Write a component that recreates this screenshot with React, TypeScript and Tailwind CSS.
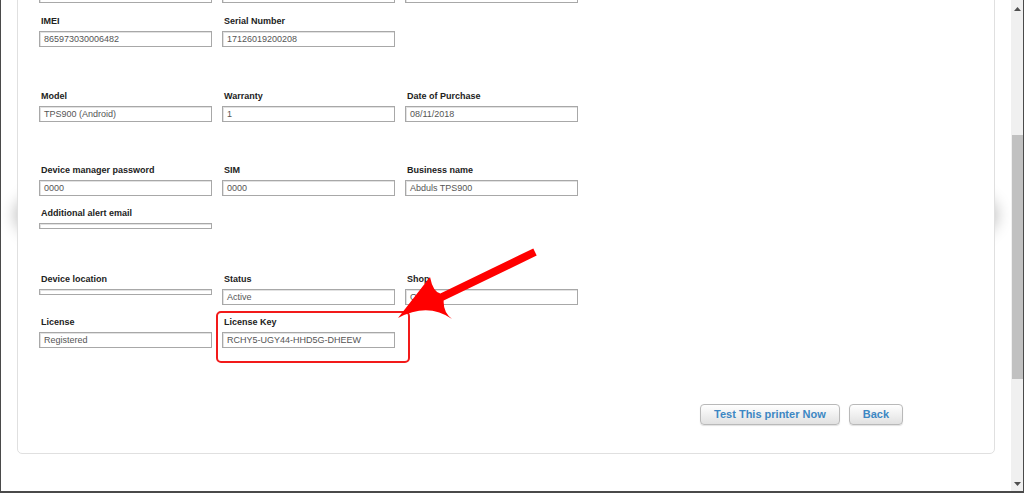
import React from 'react'

type Field = {
  label: string
  value?: string
  collapsed?: boolean
}

type Row = {
  fields: (Field | null)[]
  gap: string
}

const rows: Row[] = [
  { gap: 'mt-0', fields: [{ label: '', value: '' }, { label: '', value: '' }, { label: '', value: '' }] },
  { gap: 'mt-[12px]', fields: [{ label: 'IMEI', value: '865973030006482' }, { label: 'Serial Number', value: '17126019200208' }, null] },
  { gap: 'mt-[43px]', fields: [{ label: 'Model', value: 'TPS900 (Android)' }, { label: 'Warranty', value: '1' }, { label: 'Date of Purchase', value: '08/11/2018' }] },
  { gap: 'mt-[42px]', fields: [{ label: 'Device manager password', value: '0000' }, { label: 'SIM', value: '0000' }, { label: 'Business name', value: 'Abduls TPS900' }] },
  { gap: 'mt-[11px]', fields: [{ label: 'Additional alert email', collapsed: true }, null, null] },
  { gap: 'mt-[44px]', fields: [{ label: 'Device location', collapsed: true }, { label: 'Status', value: 'Active' }, { label: 'Shop', value: 'Online' }] },
  { gap: 'mt-[11px]', fields: [{ label: 'License', value: 'Registered' }, { label: 'License Key', value: 'RCHY5-UGY44-HHD5G-DHEEW' }, null] },
]

function FormField({ field }: { field: Field | null }) {
  if (!field) return <div className="w-[173px]" />
  return (
    <div className="flex w-[173px] flex-col">
      <div className="h-[12px] pl-[2px] text-[9px] font-bold leading-[12px] text-[#222]">{field.label}</div>
      <div
        className={`mt-[4px] w-full border border-[#a8a8a8] bg-white shadow-[inset_1px_1px_0_#e2e2e2] ${
          field.collapsed ? 'h-[6px]' : 'h-[16px]'
        }`}
      >
        {!field.collapsed && (
          <div className="px-[4px] text-[9px] leading-[14px] text-[#555]">{field.value}</div>
        )}
      </div>
    </div>
  )
}

export default function App() {
  return (
    <div
      className="flex h-[493px] w-[1024px] overflow-hidden border-r border-b-2 border-l border-[#4a4a4a] bg-white"
      style={{ fontFamily: '"Liberation Sans", Arial, sans-serif' }}
    >
      <div className="relative flex-1 overflow-hidden">
        {/* soft curved shadow behind the panel */}
        <div className="absolute top-[140px] right-[18px] left-[18px] h-[150px] rounded-[50%] shadow-[0_0_16px_4px_rgba(0,0,0,0.28)]" />

        <div className="relative mx-[16px] -mt-[42px] rounded-b-[5px] border border-[#e0e0e0] bg-white pt-[12px] pr-[20px] pb-[28px] pl-[21px]">
          {rows.map((row, i) => (
            <div key={i} className={`flex gap-[10px] ${row.gap}`}>
              {row.fields.map((f, j) => (
                <FormField key={j} field={f} />
              ))}
            </div>
          ))}

          <div className="mt-[56px] flex justify-end gap-[9px] pr-[71px]">
            <button className="h-[21px] rounded-[4px] border border-[#b9b9b9] bg-gradient-to-b from-white to-[#e1e1e1] px-[13px] text-[11px] font-bold text-[#3d87c3] shadow-[0_1px_1px_rgba(0,0,0,0.12)]">
              Test This printer Now
            </button>
            <button className="h-[21px] rounded-[4px] border border-[#b9b9b9] bg-gradient-to-b from-white to-[#e1e1e1] px-[13px] text-[11px] font-bold text-[#3d87c3] shadow-[0_1px_1px_rgba(0,0,0,0.12)]">
              Back
            </button>
          </div>
        </div>

        {/* annotation: red box */}
        <div className="absolute top-[311px] left-[215px] h-[52px] w-[194px] rounded-[5px] border-2 border-[#f21a1a]" />

        {/* annotation: red arrow */}
        <svg className="pointer-events-none absolute top-0 -left-[1px] h-[491px] w-[1011px]" viewBox="0 0 1011 491">
          <path
            d="M398 318 L430 277 Q433 292 440.3 293.4 L533.3 248.4 L536.7 255.6 L443.7 300.6 Q443 312 452 319 Q428 302 398 318 Z"
            fill="#ff0000"
          />
        </svg>
      </div>

      {/* scrollbar */}
      <div className="flex w-[12px] flex-col bg-[#f0f0f0]">
        <div className="flex h-[17px] items-center justify-center">
          <svg width="7" height="4" viewBox="0 0 7 4">
            <path d="M0 4 L3.5 0 L7 4 Z" fill="#505050" />
          </svg>
        </div>
        <div className="mt-[118px] ml-[1px] h-[244px] bg-[#c1c1c1]" />
        <div className="flex-1" />
        <div className="flex h-[14px] items-center justify-center">
          <svg width="7" height="4" viewBox="0 0 7 4">
            <path d="M0 0 L7 0 L3.5 4 Z" fill="#505050" />
          </svg>
        </div>
      </div>
    </div>
  )
}
